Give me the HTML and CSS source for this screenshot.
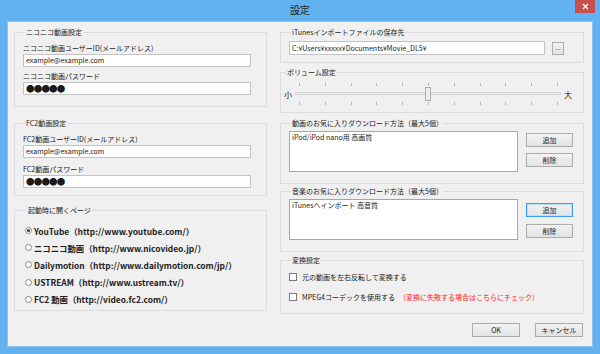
FILE: index.html
```html
<!DOCTYPE html>
<html lang="ja">
<head>
    <meta charset="UTF-8">
    <title>設定</title>
    <link rel="stylesheet" href="styles.css">
</head>
<body>
<div class="window">
    <div class="titlebar">
        <span></span>
        <span class="title">設定</span>
        <span class="close-btn">
            <svg width="7" height="7" viewBox="0 0 7 7"><path d="M1 1L6 6M6 1L1 6" stroke="#fff" stroke-width="1.4"/></svg>
        </span>
    </div>

    <div class="client">
        <div class="columns">
            <!-- left column -->
            <div class="col col-left">
                <fieldset class="group group-account">
                    <legend>ニコニコ動画設定</legend>
                    <div class="field-label">ニコニコ動画ユーザーID(メールアドレス)</div>
                    <div class="textbox">example@example.com</div>
                    <div class="field-label">ニコニコ動画パスワード</div>
                    <div class="textbox password">●●●●●</div>
                </fieldset>

                <fieldset class="group group-account group-fc2">
                    <legend>FC2動画設定</legend>
                    <div class="field-label">FC2動画ユーザーID(メールアドレス)</div>
                    <div class="textbox">example@example.com</div>
                    <div class="field-label">FC2動画パスワード</div>
                    <div class="textbox password">●●●●●</div>
                </fieldset>

                <fieldset class="group group-start">
                    <legend>起動時に開くページ</legend>
                    <div class="radio-row"><span class="radio checked"></span>YouTube（http://www.youtube.com/）</div>
                    <div class="radio-row"><span class="radio"></span>ニコニコ動画（http://www.nicovideo.jp/）</div>
                    <div class="radio-row"><span class="radio"></span>Dailymotion（http://www.dailymotion.com/jp/）</div>
                    <div class="radio-row"><span class="radio"></span>USTREAM（http://www.ustream.tv/）</div>
                    <div class="radio-row"><span class="radio"></span>FC2 動画（http://video.fc2.com/）</div>
                </fieldset>
            </div>

            <!-- right column -->
            <div class="col col-right">
                <fieldset class="group group-path">
                    <legend>iTunesインポートファイルの保存先</legend>
                    <div class="path-row">
                        <div class="textbox path">C:¥Users¥xxxxx¥Documents¥Movie_DL5¥</div>
                        <div class="btn btn-browse">...</div>
                    </div>
                </fieldset>

                <fieldset class="group group-volume">
                    <legend>ボリューム設定</legend>
                    <div class="slider-row">
                        <span class="slider-label">小</span>
                        <svg class="slider" width="270" height="28" viewBox="0 0 270 28">
                            <rect x="1.5" y="12.5" width="265" height="2" fill="#e7e7e7" stroke="#d6d6d6"/>
                            <g stroke="#b8b8b8">
                                <path d="M5.5 3v3M31.5 3v3M57.5 3v3M82.5 3v3M108.5 3v3M134.5 3v3M160.5 3v3M186.5 3v3M211.5 3v3M237.5 3v3M263.5 3v3"/>
                                <path d="M5.5 22v3M31.5 22v3M57.5 22v3M82.5 22v3M108.5 22v3M134.5 22v3M160.5 22v3M186.5 22v3M211.5 22v3M237.5 22v3M263.5 22v3"/>
                            </g>
                            <rect x="131.5" y="7.5" width="5" height="13" fill="#ececec" stroke="#acacac"/>
                        </svg>
                        <span class="slider-label">大</span>
                    </div>
                </fieldset>

                <fieldset class="group group-list">
                    <legend>動画のお気に入りダウンロード方法（最大5個）</legend>
                    <div class="list-row">
                        <div class="listbox">iPod/iPod nano用 高画質</div>
                        <div class="list-buttons">
                            <div class="btn">追加</div>
                            <div class="btn">削除</div>
                        </div>
                    </div>
                </fieldset>

                <fieldset class="group group-list group-music">
                    <legend>音楽のお気に入りダウンロード方法（最大5個）</legend>
                    <div class="list-row">
                        <div class="listbox">iTunesへインポート 高音質</div>
                        <div class="list-buttons">
                            <div class="btn focused">追加</div>
                            <div class="btn">削除</div>
                        </div>
                    </div>
                </fieldset>

                <fieldset class="group group-convert">
                    <legend>変換設定</legend>
                    <div class="check-row"><span class="checkbox"></span>元の動画を左右反転して変換する</div>
                    <div class="check-row"><span class="checkbox"></span>MPEG4コーデックを使用する<span class="warning">（変換に失敗する場合はこちらにチェック）</span></div>
                </fieldset>
            </div>
        </div>

        <div class="footer">
            <div class="btn btn-dialog">OK</div>
            <div class="btn btn-dialog">キャンセル</div>
        </div>
    </div>
</div>
</body>
</html>
```

FILE: styles.css
```css
body {
    margin: 0;
    font-family: "Noto Sans CJK JP", sans-serif;
    font-size: 7px;
    color: #1a1a1a;
}

.window {
    width: 600px;
    height: 354px;
    box-sizing: border-box;
    padding: 0 7px 7px 7px;
    background-color: #62b2f2;
    display: flex;
    flex-direction: column;
}

.titlebar {
    height: 21px;
    display: grid;
    grid-template-columns: 1fr auto 1fr;
    align-items: start;
}

.title {
    font-size: 10px;
    line-height: 20px;
    color: #1e1e1e;
}

.close-btn {
    justify-self: end;
    margin-right: -2px;
    width: 20px;
    height: 13px;
    background-color: #c7504f;
    display: flex;
    align-items: center;
    justify-content: center;
}

.client {
    flex: 1;
    background-color: #f0f0f0;
    border: 1px solid #8fc4ee;
    box-sizing: border-box;
    padding: 5px 8px 0 6px;
    display: flex;
    flex-direction: column;
}

.columns {
    display: flex;
    gap: 13px;
}

.col-left {
    width: 253px;
}

.col-right {
    width: 304px;
}

/* group boxes */
.group {
    margin: 0;
    border: 1px solid #dcdcdc;
    min-width: 0;
}

.group legend {
    margin-left: 2px;
    padding: 0 1px;
    line-height: 10px;
}

.group-account {
    padding: 6px 15px 11px 8px;
}

.group-fc2 {
    margin-top: 11px;
    padding-top: 6px;
    padding-bottom: 7px;
}

.field-label {
    line-height: 10px;
    margin-bottom: 1px;
}

.textbox + .field-label {
    margin-top: 4px;
}

.group-fc2 .textbox + .field-label {
    margin-top: 6px;
}

.textbox {
    height: 13px;
    box-sizing: border-box;
    border: 1px solid #c3c3c3;
    background-color: #fff;
    padding: 0 2px;
    font-size: 7px;
    line-height: 11px;
    white-space: nowrap;
    overflow: hidden;
}

.textbox.password {
    font-size: 8.5px;
    letter-spacing: -0.8px;
}

.group-start {
    margin-top: 9px;
    padding: 7px 0 2px 10px;
}

.radio-row {
    display: flex;
    align-items: center;
    height: 17.2px;
    font-size: 8.4px;
    font-weight: bold;
    color: #222;
    white-space: nowrap;
}

.radio {
    width: 7px;
    height: 7px;
    box-sizing: border-box;
    border: 1px solid #8a8a8a;
    border-radius: 50%;
    background-color: #fff;
    margin-right: 2px;
    display: flex;
    align-items: center;
    justify-content: center;
}

.radio.checked::after {
    content: "";
    width: 3px;
    height: 3px;
    border-radius: 50%;
    background-color: #333;
}

/* right column */
.group-path {
    padding: 4px 19px 7px 8px;
}

.path-row {
    display: flex;
    gap: 7px;
}

.textbox.path {
    flex: 1;
    height: 14px;
    line-height: 12px;
}

.btn {
    box-sizing: border-box;
    border: 1px solid #acacac;
    background: linear-gradient(#f2f2f2, #e3e3e3);
    text-align: center;
    line-height: 12px;
    height: 14px;
    white-space: nowrap;
}

.btn-browse {
    width: 12px;
    height: 13px;
    margin-top: 1px;
    line-height: 9px;
    font-size: 6px;
}

.group-volume {
    margin-top: 4px;
    padding: 3px 0 4px 3px;
}

.slider-row {
    display: flex;
    align-items: center;
}

.slider-label {
    font-size: 8px;
    width: 10px;
}

.group-list {
    margin-top: 5px;
    padding: 3px 10px 11px 8px;
}

.group-music {
    margin-top: 2px;
}

.list-row {
    display: flex;
    gap: 8px;
}

.listbox {
    width: 229px;
    height: 41px;
    box-sizing: border-box;
    border: 1px solid #a6a6a6;
    background-color: #fff;
    padding: 0 2px;
    line-height: 11px;
}

.list-buttons {
    flex: 1;
    display: flex;
    flex-direction: column;
    gap: 6px;
    margin-top: 2px;
}

.group-music .list-buttons {
    margin-top: 4px;
    gap: 7px;
}

.btn.focused {
    border-color: #3c9bf0;
    box-shadow: inset 0 0 0 1px #bfe0fb;
}

.group-convert {
    margin-top: 3px;
    padding: 2px 0 6px 8px;
}

.check-row {
    display: flex;
    align-items: center;
    height: 20px;
    white-space: nowrap;
}

.checkbox {
    width: 8px;
    height: 8px;
    box-sizing: border-box;
    border: 1px solid #7a7a7a;
    background-color: #fff;
    margin-right: 5px;
}

.warning {
    color: #f22;
    margin-left: 4px;
}

.footer {
    display: flex;
    justify-content: flex-end;
    gap: 15px;
    margin-top: 9px;
    margin-right: 1px;
}

.btn-dialog {
    width: 48px;
}
```
